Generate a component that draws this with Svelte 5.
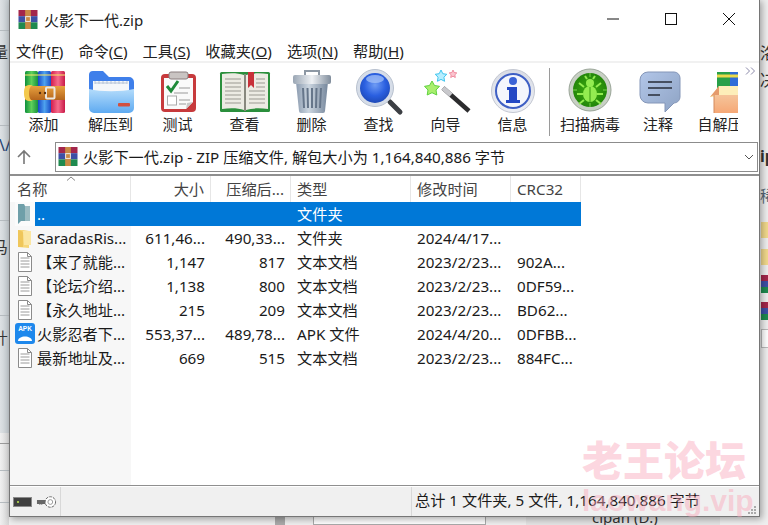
<script>
  const menus = [
    ["文件", "F"],
    ["命令", "C"],
    ["工具", "S"],
    ["收藏夹", "O"],
    ["选项", "N"],
    ["帮助", "H"]
  ];

  const tools = [
    { id: "add", label: "添加", w: 67 },
    { id: "extract", label: "解压到", w: 67 },
    { id: "test", label: "测试", w: 67 },
    { id: "view", label: "查看", w: 67 },
    { id: "del", label: "删除", w: 67 },
    { id: "find", label: "查找", w: 67 },
    { id: "wizard", label: "向导", w: 67 },
    { id: "info", label: "信息", w: 67 },
    { id: "sep" },
    { id: "virus", label: "扫描病毒", w: 76 },
    { id: "note", label: "注释", w: 60 },
    { id: "sfx", label: "自解压", w: 64 }
  ];

  const rows = [
    { icon: "up", name: "..", size: "", packed: "", type: "文件夹", time: "", crc: "", selected: true },
    { icon: "folder", name: "SaradasRis...", size: "611,46...", packed: "490,33...", type: "文件夹", time: "2024/4/17...", crc: "" },
    { icon: "doc", name: "【来了就能...", size: "1,147", packed: "817", type: "文本文档", time: "2023/2/23...", crc: "902A..." },
    { icon: "doc", name: "【论坛介绍...", size: "1,138", packed: "800", type: "文本文档", time: "2023/2/23...", crc: "0DF59..." },
    { icon: "doc", name: "【永久地址...", size: "215", packed: "209", type: "文本文档", time: "2023/2/23...", crc: "BD62..." },
    { icon: "apk", name: "火影忍者下...", size: "553,37...", packed: "489,78...", type: "APK 文件", time: "2024/4/20...", crc: "0DFBB..." },
    { icon: "doc", name: "最新地址及...", size: "669", packed: "515", type: "文本文档", time: "2023/2/23...", crc: "884FC..." }
  ];
</script>

{#snippet rarSmall()}
  <svg class="rar-small" viewBox="0 0 20 20">
    <rect width="20" height="6.5" fill="#a3264b" />
    <rect y="6.5" width="20" height="6.5" fill="#3d4fa5" />
    <rect y="13" width="20" height="7" fill="#1f8a4f" />
    <rect x="7" width="6" height="20" fill="#c98a45" />
    <rect x="7.5" y="7" width="5" height="5" fill="none" stroke="#eee" />
  </svg>
{/snippet}

<div class="desktop">
  <!-- page behind the window -->
  <div class="behind left"></div>
  <div class="behind left-low"></div>
  <i class="hline" style="top:30px"></i>
  <i class="hline" style="top:125px"></i>
  <i class="hline" style="top:220px"></i>
  <i class="hline" style="top:315px"></i>
  <i class="hline" style="top:443px;background:#9a9a9a"></i>
  <i class="hline" style="top:470px"></i>
  <i class="hline" style="top:502px"></i>
  <span class="bg-text" style="left:-8px;top:42px">量</span>
  <span class="bg-text" style="left:-1px;top:135px;color:#23426e">\/</span>
  <span class="bg-text" style="left:-8px;top:237px">马</span>
  <span class="bg-text" style="left:-8px;top:328px">卄</span>
  <span class="bg-text" style="left:760px;top:43px">洛</span>
  <span class="bg-text" style="left:760px;top:70px">决</span>
  <span class="bg-text" style="left:760px;top:146px;font-weight:700">ip</span>
  <span class="bg-text" style="left:760px;top:186px;color:#567">稀</span>
  <i class="bg-box" style="left:761px;top:222px;width:7px;height:16px;background:#f2d98c"></i>
  <i class="bg-box" style="left:761px;top:249px;width:7px;height:16px;background:#f2d98c"></i>
  <i class="bg-box rar-edge" style="left:761px;top:275px"></i>
  <i class="bg-box rar-edge" style="left:761px;top:302px"></i>
  <i class="bg-box" style="left:761px;top:329px;width:7px;height:17px;border:1px solid #bbb;background:#fff"></i>
  <i class="bg-box" style="left:275px;top:516px;width:10px;height:9px;background:#aaa"></i>
  <i class="bg-box" style="left:313px;top:516px;width:171px;height:7px;border:1px solid #aaa;background:#fff"></i>
  <i class="bg-box" style="left:526px;top:516px;width:194px;height:9px;background:#e4e4e4"></i>
  <span class="bg-text small" style="left:592px;top:507px">cipan (D:)</span>

  <div class="window">
    <div class="titlebar">
      {@render rarSmall()}
      <span class="title">火影下一代.zip</span>
      <div class="win-buttons">
        <svg viewBox="0 0 14 14"><path d="M1 7h12" stroke="#111" fill="none" /></svg>
        <svg viewBox="0 0 14 14"><rect x="1.5" y="1.5" width="11" height="11" stroke="#111" fill="none" /></svg>
        <svg viewBox="0 0 14 14"><path d="M1 1l12 12M13 1L1 13" stroke="#111" fill="none" /></svg>
      </div>
    </div>

    <div class="menubar">
      {#each menus as [text, key]}
        <span>{text}(<u>{key}</u>)</span>
      {/each}
    </div>

    <div class="toolbar">
      <div class="tools">
        {#each tools as tool}
          {#if tool.id === "sep"}
            <div class="tool-sep"></div>
          {:else}
            <div class="tool" style="width:{tool.w}px">
              <svg class="tool-icon" viewBox="0 0 48 44">
                {#if tool.id === "add"}
                  <defs>
                    <linearGradient id="gGreen" x2="1" y2="0"><stop offset="0" stop-color="#0e8f3c" /><stop offset=".5" stop-color="#5ed05a" /><stop offset="1" stop-color="#18903f" /></linearGradient>
                    <linearGradient id="gBlue" x2="1" y2="0"><stop offset="0" stop-color="#1748c8" /><stop offset=".5" stop-color="#4ea2ee" /><stop offset="1" stop-color="#1a4cc6" /></linearGradient>
                    <linearGradient id="gRed" x2="1" y2="0"><stop offset="0" stop-color="#d41c4c" /><stop offset=".5" stop-color="#f56d8c" /><stop offset="1" stop-color="#c91a48" /></linearGradient>
                    <linearGradient id="gBelt" x2="0" y2="1"><stop offset="0" stop-color="#e8a13f" /><stop offset="1" stop-color="#b5651c" /></linearGradient>
                  </defs>
                  <rect x="5" y="2" width="13" height="42" rx="1.5" fill="url(#gGreen)" />
                  <rect x="18" y="2" width="13" height="42" rx="1.5" fill="url(#gBlue)" />
                  <rect x="31" y="2" width="14" height="42" rx="1.5" fill="url(#gRed)" />
                  <path d="M5 6h13M18 6h13M31 6h14" stroke="#f6e36a" stroke-width="1.5" opacity=".7" />
                  <rect x="5" y="17" width="40" height="14" fill="url(#gBelt)" />
                  <path d="M9 16c-4 0-5 4-5 8s1 8 5 8h4c-3-1-4-4-4-8s1-7 4-8z" fill="#f3c94e" />
                  <rect x="26" y="18.5" width="8.5" height="11" rx="1" fill="none" stroke="#ece7df" stroke-width="2" />
                  <circle cx="20" cy="24" r="1.2" fill="#5b3110" />
                  <circle cx="25" cy="24" r="1.2" fill="#5b3110" />
                {:else if tool.id === "extract"}
                  <defs>
                    <linearGradient id="gFront" x2="0" y2="1"><stop offset="0" stop-color="#b4dcfb" /><stop offset="1" stop-color="#5eaaf1" /></linearGradient>
                  </defs>
                  <path d="M2 6a4 4 0 0 1 4-4h10l6 6h20a5 5 0 0 1 5 5v26H2z" fill="#3f7fea" />
                  <rect x="6" y="12" width="36" height="16" fill="#f5f7fa" />
                  <path d="M8 14h32M8 12v3M12 12v3M16 12v3M20 12v3M24 12v3M28 12v3M32 12v3M36 12v3M40 12v3" stroke="#b6c4d8" />
                  <path d="M2 20c12 3 32 3 45 0v19a5 5 0 0 1-5 5H7a5 5 0 0 1-5-5z" fill="url(#gFront)" />
                  <rect x="31" y="34" width="12" height="3.5" rx="1" fill="#d2503f" />
                {:else if tool.id === "test"}
                  <rect x="7" y="5" width="35" height="38" rx="4" fill="#c73a3c" />
                  <path d="M10 9h29v24l-7 7H10z" fill="#fafafa" />
                  <path d="M32 40l7-7-6 1z" fill="#c9c9c9" />
                  <path d="M15 8V5a2 2 0 0 1 2-2h15a2 2 0 0 1 2 2v3a2 2 0 0 1-2 2H17a2 2 0 0 1-2-2z" fill="#c9c4c2" stroke="#8a7f7f" />
                  <path d="M13 17l4 5 7-10" fill="none" stroke="#1f8a3a" stroke-width="3" />
                  <path d="M25 19h11M20 24h14M25 31h11M25 35h7" stroke="#bbb" stroke-width="1.4" />
                  <rect x="13.5" y="27" width="9" height="9" fill="#fff" stroke="#aaa" />
                {:else if tool.id === "view"}
                  <rect x="-1" y="3" width="50" height="40" rx="1.5" fill="#2b8f3c" />
                  <path d="M1 5c8-1 16-1 22 1v35c-6-2-14-2-22-1z" fill="#ecebe3" />
                  <path d="M47 5c-8-1-16-1-22 1v35c6-2 14-2 22-1z" fill="#ecebe3" />
                  <path d="M4 10h16M4 14h16M4 18h16M4 22h16M4 26h16M4 30h16M4 34h16M28 22h16M28 26h16M28 30h16M28 34h16M35 10h9M35 14h9M35 18h9" stroke="#b5b5ad" stroke-width="1.5" />
                  <path d="M27 3h6v16l-3-3-3 3z" fill="#c7323a" />
                  <rect x="23" y="5" width="2" height="37" fill="#88887e" />
                {:else if tool.id === "del"}
                  <defs>
                    <linearGradient id="gCan" x2="1" y2="0"><stop offset="0" stop-color="#8c9cb0" /><stop offset=".4" stop-color="#ccd6e0" /><stop offset="1" stop-color="#76879c" /></linearGradient>
                    <linearGradient id="gLid" x2="1" y2="0"><stop offset="0" stop-color="#9aa6b4" /><stop offset=".5" stop-color="#eef1f4" /><stop offset="1" stop-color="#808d9c" /></linearGradient>
                  </defs>
                  <path d="M17 7V2h14v5" fill="none" stroke="#8d98a4" stroke-width="2" />
                  <path d="M8 13h32l-3 29a2 2 0 0 1-2 2H13a2 2 0 0 1-2-2z" fill="url(#gCan)" />
                  <path d="M15 19l1 20M24 19v20M33 19l-1 20M19.500 19l.5 20M28.500 19l-.5 20" stroke="#66768a" stroke-width="2" />
                  <rect x="5" y="6" width="38" height="9" rx="2" fill="url(#gLid)" />
                {:else if tool.id === "find"}
                  <defs>
                    <radialGradient id="gLens" cx=".5" cy=".4" r=".6"><stop offset="0" stop-color="#6f9cf4" /><stop offset=".6" stop-color="#2a5fe0" /><stop offset="1" stop-color="#1e4ab8" /></radialGradient>
                  </defs>
                  <path d="M35 33l10 10" stroke="#3c3f44" stroke-width="5" stroke-linecap="round" />
                  <circle cx="20" cy="19" r="18.500" fill="#d6dde8" stroke="#b8c1cf" />
                  <circle cx="20" cy="19" r="15" fill="url(#gLens)" />
                  <ellipse cx="20" cy="10" rx="9" ry="4" fill="#a9c6fa" opacity=".7" />
                {:else if tool.id === "wizard"}
                  <path d="M21 19l26 23" stroke="#2c2c2e" stroke-width="4.500" />
                  <path d="M21 19l8 7" stroke="#c8c8cc" stroke-width="4.500" />
                  <path d="M10 12l2.500 4.500 5 .8-3.500 3.700.8 5L10 23.700l-4.800 2.300.8-5-3.500-3.700 5-.8z" fill="#a9ef6e" stroke="#5fd23f" />
                  <path d="M19 1l1.800 3.700 4 .6-2.900 2.900.7 4.100L19 10.400l-3.600 1.900.7-4.100-2.900-2.900 4-.6z" fill="#b6eeff" stroke="#3fc5ee" />
                  <path d="M31 1l1.100 2.500 2.700.4-2 1.900.5 2.700-2.300-1.300-2.300 1.300.5-2.700-2-1.900 2.700-.4z" fill="#fbc4cf" stroke="#f08ca0" />
                {:else if tool.id === "info"}
                  <defs>
                    <linearGradient id="gRing" x2="0" y2="1"><stop offset="0" stop-color="#d8dbe4" /><stop offset="1" stop-color="#eef0f6" /></linearGradient>
                  </defs>
                  <circle cx="24" cy="22" r="21.500" fill="url(#gRing)" stroke="#c4c8d2" />
                  <circle cx="24" cy="22" r="17" fill="#f4f6fc" stroke="#3e5fc4" stroke-width="2" />
                  <circle cx="24" cy="12" r="4" fill="#3b63d6" />
                  <path d="M18 18h10v13h3v3H17v-3h3v-10h-2z" fill="#2448c4" />
                {:else if tool.id === "virus"}
                  <defs>
                    <radialGradient id="gBug"><stop offset="0" stop-color="#3fae10" /><stop offset="1" stop-color="#23860a" /></radialGradient>
                  </defs>
                  <circle cx="24" cy="21" r="21" fill="#c8d0c4" stroke="#9aa598" />
                  <circle cx="24" cy="21" r="17" fill="url(#gBug)" />
                  <path d="M24 4v4M24 34v4M7 21h4M37 21h4" stroke="#7ad34c" />
                  <ellipse cx="24" cy="25" rx="7" ry="8" fill="#93ec50" />
                  <circle cx="24" cy="14" r="4" fill="#93ec50" />
                  <path d="M18 18l-5-4M30 18l5-4M17 25h-6M31 25h6M18 31l-5 4M30 31l5 4M21 10l-2-3M27 10l2-3" stroke="#93ec50" stroke-width="2" fill="none" />
                  <path d="M24 18v15" stroke="#3b9a12" />
                {:else if tool.id === "note"}
                  <defs>
                    <linearGradient id="gNote" x1="0" y1="0" x2="1" y2="1"><stop offset="0" stop-color="#b2c6e8" /><stop offset="1" stop-color="#8ea3c4" /></linearGradient>
                  </defs>
                  <path d="M14 3h26a6 6 0 0 1 6 6v19a6 6 0 0 1-6 6H40L31 43V34H14a8 8 0 0 1-8-8V11a8 8 0 0 1 8-8z" fill="url(#gNote)" stroke="#8496b8" />
                  <path d="M14 13h24M14 19h24M14 26h12" stroke="#464f60" stroke-width="2" />
                {:else if tool.id === "sfx"}
                  <defs>
                    <linearGradient id="gBox" x2="0" y2="1"><stop offset="0" stop-color="#f5c49a" /><stop offset="1" stop-color="#f6a876" /></linearGradient>
                  </defs>
                  <rect x="21" y="3" width="13" height="22" fill="#28a048" />
                  <rect x="34" y="3" width="13" height="22" fill="#2f6cd8" />
                  <path d="M21 7h26" stroke="#e9d94a" stroke-width="3" />
                  <path d="M14 28l9-11h25v11z" fill="#fdeeb9" />
                  <path d="M18 26h30v18H18z" fill="url(#gBox)" />
                  <path d="M14 28l9-11v9h-5z" fill="#e59a6c" />
                  <path d="M18 26v18" stroke="#d48a5c" />
                {/if}
              </svg>
              <span class="tool-label">{tool.label}</span>
            </div>
          {/if}
        {/each}
      </div>
      <svg class="more" viewBox="0 0 11 8"><path d="M1 .5L4.500 4 1 7.500M6 .5L9.500 4 6 7.500" fill="none" stroke="#8a88a8" /></svg>
    </div>

    <div class="addressbar">
      <svg class="up-arrow" viewBox="0 0 16 16"><path d="M8 15V2M2 8l6-6 6 6" fill="none" stroke="#777" stroke-width="1.600" /></svg>
      <div class="address">
        {@render rarSmall()}
        <span class="address-text">火影下一代.zip - ZIP 压缩文件, 解包大小为 1,164,840,886 字节</span>
        <svg class="chev" viewBox="0 0 10 6"><path d="M1 1l4 4 4-4" fill="none" stroke="#555" /></svg>
      </div>
    </div>

    <div class="list">
      <svg class="sort" viewBox="0 0 10 5"><path d="M1 4.500L5 1l4 3.500" fill="none" stroke="#888" /></svg>
      <div class="row head">
        <div class="cell first">名称</div>
        <div class="cell num">大小</div>
        <div class="cell num">压缩后...</div>
        <div class="cell">类型</div>
        <div class="cell">修改时间</div>
        <div class="cell">CRC32</div>
      </div>
      {#each rows as r}
        <div class="row" class:selected={r.selected}>
          <div class="file-icon">
            {#if r.icon === "up"}
              <svg viewBox="0 0 20 24" class="fi"><rect width="20" height="24" fill="#fbfbfb" /><path d="M3 2h6l1 2h5v15H6l-3 3z" fill="#6f9fa9" /><path d="M10 4h5v15h-5z" fill="#9dbcc2" /></svg>
            {:else if r.icon === "folder"}
              <svg viewBox="0 0 20 24" class="fi"><path d="M3 4h5l6 1v17l-11-1z" fill="#f6d678" /><path d="M8 5h8v14H9z" fill="#fbe6a2" /><path d="M3 4c3 1 5 1 5 3v14H3z" fill="#efc65a" /></svg>
            {:else if r.icon === "doc"}
              <svg viewBox="0 0 20 24" class="fi"><path d="M3.500 2.500h9l4 4v15h-13z" fill="#fff" stroke="#8b8b8b" /><path d="M12.500 2.500v4h4" fill="none" stroke="#8b8b8b" /><path d="M5.500 8h9M5.500 11h9M5.500 14h9M5.500 17h9" stroke="#9a9a9a" /></svg>
            {:else}
              <svg viewBox="0 0 20 24" class="fi"><rect y="1" width="20" height="21" rx="3" fill="#1e88ec" /><text x="10" y="9" font-size="6.500" font-weight="700" fill="#fff" text-anchor="middle" font-family="Liberation Sans">APK</text><path d="M3 19c0-6 14-6 14 0z" fill="#fff" /></svg>
            {/if}
          </div>
          <div class="cell name">{r.name}</div>
          <div class="cell num">{r.size}</div>
          <div class="cell num">{r.packed}</div>
          <div class="cell">{r.type}</div>
          <div class="cell">{r.time}</div>
          <div class="cell">{r.crc}</div>
        </div>
      {/each}
    </div>

    <div class="statusbar">
      <div class="status-icons">
        <span class="battery"><i></i></span>
        <svg class="key" viewBox="0 0 22 14">
          <path d="M1 5h11v4H7l-1 1-1-1-1 1-1-1H1z" fill="#666" />
          <circle cx="15" cy="7" r="5.500" fill="#fff" stroke="#666" stroke-dasharray="3 1" />
          <circle cx="15" cy="7" r="2.500" fill="none" stroke="#999" />
        </svg>
      </div>
      <div class="status-spacer"></div>
      <div class="status-text">总计 1 文件夹, 5 文件, 1,164,840,886 字节</div>
      <svg class="grip" viewBox="0 0 10 10" fill="#aaa">
        <rect x="7" y="1" width="2" height="2" /><rect x="4" y="4" width="2" height="2" /><rect x="7" y="4" width="2" height="2" />
        <rect x="1" y="7" width="2" height="2" /><rect x="4" y="7" width="2" height="2" /><rect x="7" y="7" width="2" height="2" />
      </svg>
    </div>
  </div>

  <div class="watermark">
    <div class="wm-big">老王论坛</div>
    <div class="wm-small">laowang.vip</div>
  </div>
</div>

<style>
  :global(body) {
    margin: 0;
  }
  .desktop {
    position: relative;
    width: 768px;
    height: 525px;
    overflow: hidden;
    background: #efefef;
    font-family: "Noto Sans", "Noto Sans CJK SC", sans-serif;
    font-size: 15.2px;
    color: #1a1a1a;
  }
  .behind {
    position: absolute;
    left: 0;
    width: 9px;
  }
  .left {
    top: 0;
    height: 433px;
    background: linear-gradient(90deg, #dde1e4, #c3cace);
  }
  .left-low {
    top: 433px;
    height: 92px;
    background: linear-gradient(90deg, #f0f0f0, #d5d5d5);
  }
  .hline {
    position: absolute;
    left: 0;
    width: 9px;
    height: 1px;
    background: #b5bbbf;
  }
  .bg-text {
    position: absolute;
    font-size: 16px;
    line-height: 20px;
    color: #333;
  }
  .bg-text.small {
    font-size: 15px;
  }
  .bg-box {
    position: absolute;
  }
  .rar-edge {
    width: 7px;
    height: 18px;
    background: linear-gradient(#a3264b 33%, #3d4fa5 33% 66%, #1f8a4f 66%);
  }

  .window {
    position: absolute;
    left: 9px;
    top: -1px;
    width: 751px;
    height: 518px;
    box-sizing: border-box;
    border: 1px solid #767676;
    background: #fff;
    box-shadow: 2px 2px 7px rgba(0, 0, 0, 0.35);
    display: flex;
    flex-direction: column;
  }

  .titlebar {
    height: 38px;
    flex: none;
    display: flex;
    align-items: center;
    padding-left: 8px;
  }
  .rar-small {
    width: 20px;
    height: 19px;
    flex: none;
  }
  .title {
    margin-left: 6px;
    font-size: 15px;
    color: #222;
  }
  .win-buttons {
    margin-left: auto;
    display: flex;
    gap: 44px;
    padding-right: 23px;
  }
  .win-buttons svg {
    width: 14px;
    height: 14px;
    overflow: visible;
  }

  .menubar {
    height: 23px;
    flex: none;
    display: flex;
    align-items: center;
    gap: 15px;
    padding-left: 6px;
    color: #222;
  }

  .toolbar {
    position: relative;
    height: 80px;
    flex: none;
    border-top: 2px solid #f1f1f1;
    box-sizing: border-box;
  }
  .tools {
    width: 728px;
    height: 78px;
    overflow: hidden;
    display: flex;
  }
  .tool {
    flex: none;
    display: flex;
    flex-direction: column;
    align-items: center;
    padding-top: 6px;
  }
  .tool-icon {
    width: 48px;
    height: 44px;
    overflow: visible;
    flex: none;
  }
  .tool-label {
    white-space: nowrap;
    line-height: 20px;
    margin-top: 1px;
    color: #222;
    font-size: 15px;
  }
  .tool-sep {
    flex: none;
    width: 1px;
    height: 68px;
    margin: 5px 2px 0 3px;
    background: #9a9a9a;
  }
  .more {
    position: absolute;
    left: 735px;
    top: 4px;
    width: 11px;
    height: 8px;
  }

  .addressbar {
    height: 31px;
    flex: none;
    display: flex;
    align-items: center;
    padding-left: 6px;
  }
  .up-arrow {
    width: 16px;
    height: 16px;
    margin-right: 23px;
    flex: none;
  }
  .address {
    width: 703px;
    height: 30px;
    box-sizing: border-box;
    border: 1px solid #8c8c8c;
    display: flex;
    align-items: center;
    padding-left: 2px;
  }
  .address-text {
    margin-left: 5px;
    margin-bottom: 1px;
  }
  .chev {
    margin-left: auto;
    margin-right: 3px;
    width: 10px;
    height: 6px;
  }

  .list {
    position: relative;
    flex: 1;
    margin-top: 2px;
    border-top: 2px solid #8f8f8f;
    border-bottom: 1px solid #8f8f8f;
    background: linear-gradient(90deg, #f7f7f7 121px, #fff 121px);
  }
  .sort {
    position: absolute;
    left: 56px;
    top: 0;
    width: 10px;
    height: 5px;
  }
  .row {
    display: grid;
    grid-template-columns: 25px 96px 80px 80px 120px 100px 70px;
    height: 24px;
    line-height: 24px;
  }
  .row.head {
    grid-template-columns: 121px 80px 80px 120px 100px 70px;
    height: 26px;
    line-height: 26px;
    background: #fff;
    color: #444;
  }
  .head .cell {
    border-right: 1px solid #e6e6e6;
  }
  .head .first {
    padding-left: 7px;
  }
  .cell {
    padding: 0 6px;
    white-space: nowrap;
    overflow: hidden;
    box-sizing: border-box;
  }
  .cell.name {
    padding: 0 0 0 2px;
  }
  .num {
    text-align: right;
  }
  .selected .cell {
    background: #0078d7;
    color: #fff;
  }
  .file-icon {
    display: flex;
    align-items: center;
    justify-content: flex-end;
  }
  .fi {
    width: 20px;
    height: 24px;
    flex: none;
  }

  .statusbar {
    height: 30px;
    flex: none;
    display: flex;
    background: #f0f0f0;
    border-top: 1px solid #fff;
    box-sizing: border-box;
  }
  .status-icons {
    width: 51px;
    display: flex;
    align-items: center;
    gap: 4px;
    padding-left: 3px;
    box-sizing: border-box;
    border-right: 1px solid #d8d8d8;
    flex: none;
  }
  .battery {
    width: 19px;
    height: 10px;
    background: #3f3f3f;
    border: 1px solid #8a8a8a;
    box-sizing: border-box;
    flex: none;
    display: flex;
    align-items: center;
    padding-left: 3px;
  }
  .battery i {
    width: 2px;
    height: 2px;
    background: #9fc04a;
  }
  .key {
    width: 21px;
    height: 14px;
    flex: none;
  }
  .status-spacer {
    width: 350px;
    flex: none;
    border-right: 1px solid #d8d8d8;
  }
  .status-text {
    padding-left: 3px;
    line-height: 27px;
    white-space: nowrap;
  }
  .grip {
    margin: auto 2px 1px auto;
    width: 10px;
    height: 10px;
    flex: none;
  }

  .watermark {
    position: absolute;
    left: 582px;
    top: 433px;
    width: 170px;
    pointer-events: none;
    color: rgba(250, 165, 185, 0.45);
    font-family: "Noto Sans CJK SC", sans-serif;
    font-weight: 900;
    white-space: nowrap;
  }
  .wm-big {
    font-size: 41px;
    line-height: 50px;
  }
  .wm-small {
    font-family: "Liberation Sans", sans-serif;
    font-weight: 700;
    font-size: 30px;
    line-height: 36px;
  }
</style>
